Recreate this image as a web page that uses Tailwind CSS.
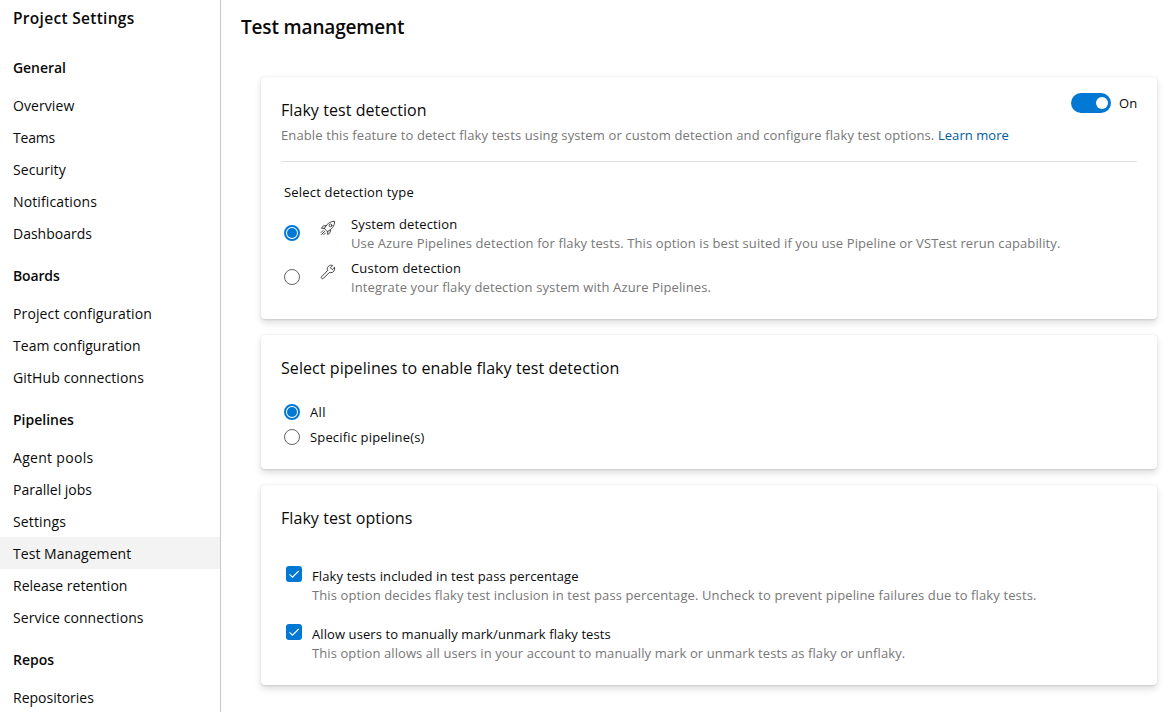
<!DOCTYPE html>
<html lang="en">
<head>
<meta charset="utf-8">
<title>Test management - Project Settings</title>
<script src="https://cdn.jsdelivr.net/npm/@tailwindcss/browser@4"></script>
</head>
<body class="bg-white font-['Open_Sans',sans-serif] text-[#0a0a0a] text-[13px] tracking-[0.116px] whitespace-nowrap overflow-hidden">
<div class="flex h-[715px] w-[1172px]">
  <nav class="w-[221px] h-[712px] shrink-0 border-r border-[#c8c8c8] overflow-hidden text-[14px] tracking-[0.08px] leading-8">
    <h1 class="h-[41px] pl-[13px] pt-1 text-[15.5px] leading-7 font-semibold tracking-[0.3px]">Project Settings</h1>
    <h2 class="pl-[13px] pt-[11px] pb-[5px] font-semibold tracking-[-0.05px]">General</h2>
    <ul>
      <li class="h-8 pl-[13px] pt-px">Overview</li>
      <li class="h-8 pl-[13px] pt-px tracking-[-0.2px]">Teams</li>
      <li class="h-8 pl-[13px] pt-px">Security</li>
      <li class="h-8 pl-[13px] pt-px tracking-[0.12px]">Notifications</li>
      <li class="h-8 pl-[13px] pt-px tracking-[0px]">Dashboards</li>
    </ul>
    <h2 class="pl-[13px] pt-[11px] pb-[5px] font-semibold tracking-[-0.15px]">Boards</h2>
    <ul>
      <li class="h-8 pl-[13px] pt-px tracking-[0.12px]">Project configuration</li>
      <li class="h-8 pl-[13px] pt-px tracking-[0.03px]">Team configuration</li>
      <li class="h-8 pl-[13px] pt-px tracking-[0.12px]">GitHub connections</li>
    </ul>
    <h2 class="pl-[13px] pt-[11px] pb-[5px] font-semibold tracking-[0px]">Pipelines</h2>
    <ul>
      <li class="h-8 pl-[13px] pt-px tracking-[0.3px]">Agent pools</li>
      <li class="h-8 pl-[13px] pt-px tracking-[0px]">Parallel jobs</li>
      <li class="h-8 pl-[13px] pt-px tracking-[0.15px]">Settings</li>
      <li class="h-8 pl-[13px] pt-px bg-[#f3f3f3] tracking-[0.05px]">Test Management</li>
      <li class="h-8 pl-[13px] pt-px tracking-[0px]">Release retention</li>
      <li class="h-8 pl-[13px] pt-px">Service connections</li>
    </ul>
    <h2 class="pl-[13px] pt-[11px] pb-[5px] font-semibold tracking-[0px]">Repos</h2>
    <ul>
      <li class="h-8 pl-[13px] pt-px tracking-[0px]">Repositories</li>
    </ul>
  </nav>

  <main class="flex-1 pl-5 pr-[15px]">
    <h1 class="h-[77px] pt-[11px] text-[19px] leading-8 font-semibold tracking-[-0.16px]">Test management</h1>

    <div class="ml-5 flex flex-col gap-4">
      <section class="h-[242px] rounded-[4px] bg-white px-5 pt-[16px] shadow-[0_3.2px_7.2px_rgba(0,0,0,0.132),0_0.6px_1.8px_rgba(0,0,0,0.108)]">
        <div class="flex justify-between border-b border-[#dfdfdf] pb-[16px]">
          <div class="pt-[5px]">
            <h2 class="text-[16px] leading-6 tracking-[0.07px]">Flaky test detection</h2>
            <p class="mt-[3px] leading-5 tracking-[0.125px] text-[#777]">Enable this feature to detect flaky tests using system or custom detection and configure flaky test options. <a class="tracking-[0.05px] text-[#005a9e]">Learn more</a></p>
          </div>
          <div class="flex h-5 items-center gap-2">
            <div class="flex h-5 w-10 items-center justify-end rounded-full bg-[#0078d4] pr-[3.5px]"><div class="size-3 rounded-full bg-white"></div></div>
            <span class="w-[18px] leading-5">On</span>
          </div>
        </div>
        <div class="pl-[3px] pt-5">
          <h3 class="leading-5 tracking-[0.18px]">Select detection type</h3>
          <div class="mt-[13px] flex h-[38px]">
            <svg class="mt-[10px] size-4" viewBox="0 0 16 16"><circle cx="8" cy="8" r="7" fill="#fff" stroke="#0078d4" stroke-width="2"/><circle cx="8" cy="8" r="5" fill="#0078d4"/></svg>
            <svg class="ml-5 mt-[5px] size-4" viewBox="0 0 16 16" fill="none" stroke="#333" stroke-width="0.9" stroke-linejoin="round" stroke-linecap="round"><path d="M4.6 8.3C6.4 4.2 9.8 1.4 14.6 1.3C14.6 6 12 9.4 7.7 11.4ZM6.4 5.6L3.4 5.8L1.4 8.3L4.6 8.3M10.4 9.6L10.2 12.5L7.7 14.6L7.7 11.4M3 10.6L1.2 12.4M4.7 11.4L1.5 14.5M5.4 13L3.8 14.6"/><circle cx="10.5" cy="5.4" r="1.4"/></svg>
            <div class="ml-[15px] leading-[19px]"><p class="tracking-[0.12px]">System detection</p><p class="tracking-[0.108px] text-[#777]">Use Azure Pipelines detection for flaky tests. This option is best suited if you use Pipeline or VSTest rerun capability.</p></div>
          </div>
          <div class="mt-[6px] flex h-[38px]">
            <svg class="mt-[10px] size-4" viewBox="0 0 16 16"><circle cx="8" cy="8" r="7.5" fill="#fff" stroke="#666"/></svg>
            <svg class="ml-5 mt-[5px] size-4" viewBox="0 0 16 16" fill="none" stroke="#333" stroke-width="0.95" stroke-linejoin="round"><path d="M12.7 1.5L10.4 3.8L12.2 5.6L14.5 3.3C15.2 6.2 13.3 8.8 10.7 8.7C10.2 8.7 9.8 8.6 9.4 8.4L3.6 14.2C2.2 15.6.4 13.8 1.8 12.4L7.6 6.6C6.2 3.4 9.4.2 12.7 1.5Z"/></svg>
            <div class="ml-[15px] leading-[19px]"><p class="tracking-[0.18px]">Custom detection</p><p class="text-[#777]">Integrate your flaky detection system with Azure Pipelines.</p></div>
          </div>
        </div>
      </section>

      <section class="h-[134px] rounded-[4px] bg-white px-5 pt-[21px] shadow-[0_3.2px_7.2px_rgba(0,0,0,0.132),0_0.6px_1.8px_rgba(0,0,0,0.108)]">
        <h2 class="text-[16px] leading-6 tracking-[0.07px]">Select pipelines to enable flaky test detection</h2>
        <div class="mt-5 flex flex-col gap-px pl-[3px] leading-6">
          <div class="flex items-center gap-[10px]"><svg class="size-4" viewBox="0 0 16 16"><circle cx="8" cy="8" r="7" fill="#fff" stroke="#0078d4" stroke-width="2"/><circle cx="8" cy="8" r="5" fill="#0078d4"/></svg><span class="tracking-[0.4px]">All</span></div>
          <div class="flex items-center gap-[10px]"><svg class="size-4" viewBox="0 0 16 16"><circle cx="8" cy="8" r="7.5" fill="#fff" stroke="#666"/></svg><span class="tracking-[0.16px]">Specific pipeline(s)</span></div>
        </div>
      </section>

      <section class="h-[200px] rounded-[4px] bg-white px-5 pt-[21px] shadow-[0_3.2px_7.2px_rgba(0,0,0,0.132),0_0.6px_1.8px_rgba(0,0,0,0.108)]">
        <h2 class="text-[16px] leading-6 tracking-[0.07px]">Flaky test options</h2>
        <div class="mt-9 flex flex-col gap-5 pl-[5px] leading-[19px]">
          <div class="flex gap-[10px]">
            <svg class="size-4" viewBox="0 0 16 16"><rect width="16" height="16" rx="3" fill="#0078d4"/><path d="M3.5 8.3L6.5 11.2L12.7 5" fill="none" stroke="#fff" stroke-width="1.1"/></svg>
            <div class="pt-px"><p>Flaky tests included in test pass percentage</p><p class="text-[#777]">This option decides flaky test inclusion in test pass percentage. Uncheck to prevent pipeline failures due to flaky tests.</p></div>
          </div>
          <div class="-mt-px flex gap-[10px]">
            <svg class="size-4" viewBox="0 0 16 16"><rect width="16" height="16" rx="3" fill="#0078d4"/><path d="M3.5 8.3L6.5 11.2L12.7 5" fill="none" stroke="#fff" stroke-width="1.1"/></svg>
            <div class="pt-px"><p class="tracking-[0.09px]">Allow users to manually mark/unmark flaky tests</p><p class="tracking-[0.092px] text-[#777]">This option allows all users in your account to manually mark or unmark tests as flaky or unflaky.</p></div>
          </div>
        </div>
      </section>
    </div>
  </main>
</div>
</body>
</html>
